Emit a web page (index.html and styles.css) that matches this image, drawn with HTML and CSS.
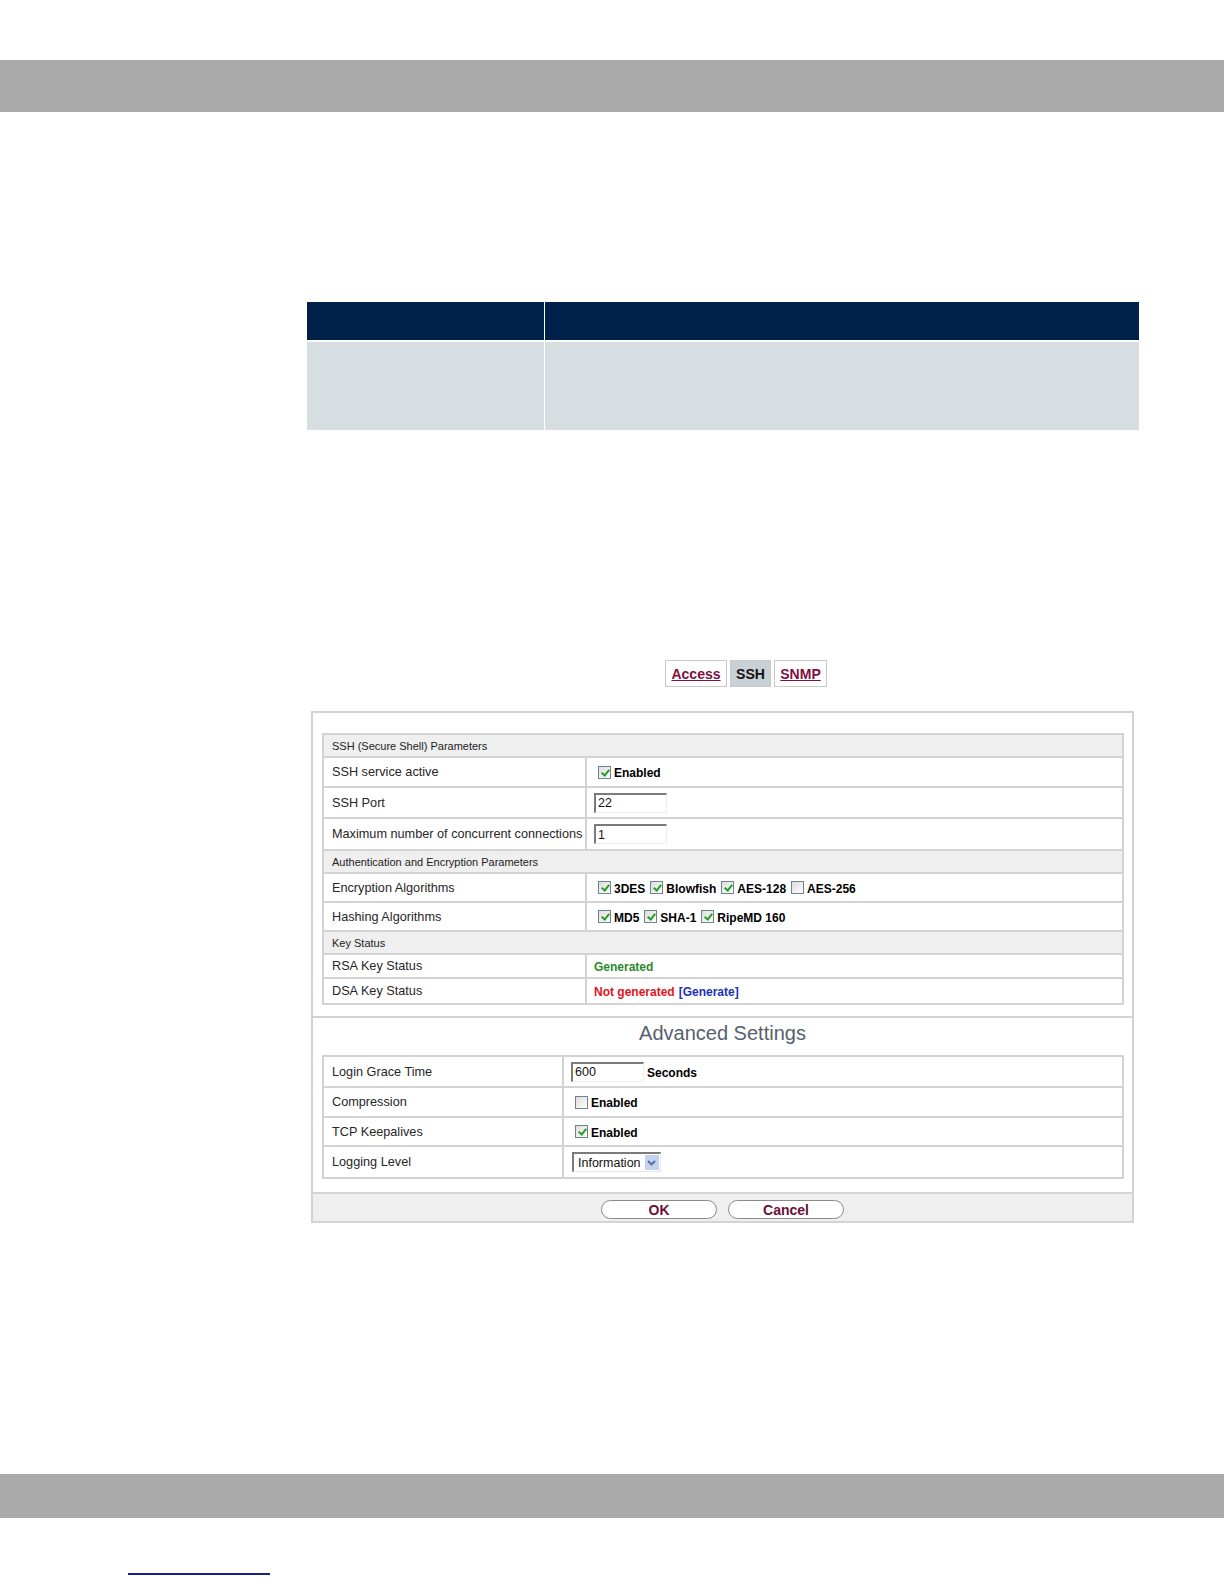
FILE: index.html
```html
<!DOCTYPE html>
<html>
<head>
<meta charset="utf-8">
<link rel="stylesheet" href="styles.css">
</head>
<body>
<div class="topbar"></div>

<div class="doc-table">
  <div class="doc-head"><div class="dh-cell"></div><div class="dh-cell"></div></div>
  <div class="doc-body"><div class="db-cell"></div><div class="db-cell"></div></div>
</div>

<div class="tabs">
  <a class="tab link t-access">Access</a>
  <span class="tab active">SSH</span>
  <a class="tab link t-snmp">SNMP</a>
</div>

<div class="panel">
  <div class="grid main">
    <div class="sect">SSH (Secure Shell) Parameters</div>
    <div class="lbl h28">SSH service active</div>
    <div class="val h28"><span class="cb on"></span><b>Enabled</b></div>
    <div class="lbl h29">SSH Port</div>
    <div class="val h29"><span class="inp">22</span></div>
    <div class="lbl h30">Maximum number of concurrent connections</div>
    <div class="val h30"><span class="inp">1</span></div>

    <div class="sect">Authentication and Encryption Parameters</div>
    <div class="lbl h27">Encryption Algorithms</div>
    <div class="val h27"><span class="cb on"></span><b>3DES</b><span class="cb on"></span><b>Blowfish</b><span class="cb on"></span><b>AES-128</b><span class="cb"></span><b>AES-256</b></div>
    <div class="lbl h27">Hashing Algorithms</div>
    <div class="val h27"><span class="cb on"></span><b>MD5</b><span class="cb on"></span><b>SHA-1</b><span class="cb on"></span><b>RipeMD 160</b></div>

    <div class="sect">Key Status</div>
    <div class="lbl h22">RSA Key Status</div>
    <div class="val h22"><b class="green">Generated</b></div>
    <div class="lbl h24">DSA Key Status</div>
    <div class="val h24"><b class="red">Not generated</b><b class="blue">[Generate]</b></div>
  </div>

  <div class="adv">
    <div class="adv-title">Advanced Settings</div>
    <div class="grid second">
      <div class="lbl h29">Login Grace Time</div>
      <div class="val h29"><span class="inp">600</span><b class="unit">Seconds</b></div>
      <div class="lbl h28">Compression</div>
      <div class="val h28"><span class="cb"></span><b>Enabled</b></div>
      <div class="lbl h27">TCP Keepalives</div>
      <div class="val h27"><span class="cb on"></span><b>Enabled</b></div>
      <div class="lbl h30">Logging Level</div>
      <div class="val h30"><span class="sel">Information<span class="arrow"><svg width="9" height="6" viewBox="0 0 9 6"><path d="M1 1 L4.5 4.5 L8 1" fill="none" stroke="#4b6ea8" stroke-width="1.8"/></svg></span></span></div>
    </div>
  </div>

  <div class="foot">
    <span class="btn">OK</span>
    <span class="btn">Cancel</span>
  </div>
</div>

<div class="bottombar"></div>
<div class="footlink"></div>
</body>
</html>
```

FILE: styles.css
```css
html, body {
  margin: 0;
  padding: 0;
  background: #ffffff;
  font-family: "Liberation Sans", Arial, sans-serif;
  color: #000;
}
.topbar {
  margin-top: 60px;
  height: 52px;
  background: #aaaaaa;
}

/* document table */
.doc-table {
  margin: 190px 0 0 307px;
  width: 832px;
}
.doc-head, .doc-body {
  display: grid;
  grid-template-columns: 237px 1fr;
  column-gap: 1px;
  background: #ffffff;
}
.doc-head { height: 38px; margin-bottom: 2px; }
.doc-body { height: 88px; }
.dh-cell { background: #00214a; }
.db-cell { background: #d7dee1; }

/* tabs */
.tabs {
  margin: 230px 0 0 665px;
  display: flex;
  gap: 3px;
  height: 27px;
}
.tab {
  box-sizing: border-box;
  height: 27px;
  border: 1px solid #c9c9c9;
  display: flex;
  align-items: center;
  justify-content: center;
  font-size: 14px;
  font-weight: bold;
}
.tab.link {
  color: #80103f;
  text-decoration: underline;
  background: #fff;
}
.t-access { width: 62px; }
.tab.active { width: 41px; background: #c9d0d6; color: #111; }
.t-snmp { width: 53px; }

/* panel */
.panel {
  margin: 24px 0 0 311px;
  width: 823px;
  box-sizing: border-box;
  border: 2px solid #d3d3d3;
}
.grid {
  display: grid;
  border: 2px solid #d3d3d3;
  background: #d3d3d3;
  gap: 2px;
  margin: 0 8px 0 9px;
}
.grid.main {
  margin-top: 20px;
  grid-template-columns: 261px 1fr;
}
.grid.second {
  grid-template-columns: 238px 1fr;
}
.sect {
  grid-column: 1 / -1;
  background: #efefef;
  height: 21px;
  font-size: 11px;
  color: #222;
  display: flex;
  align-items: center;
  padding-left: 8px;
}
.lbl, .val {
  background: #fff;
  display: flex;
  align-items: center;
}
.lbl { padding-left: 8px; color: #262626; font-size: 12.7px; }
.val { padding-left: 7px; font-size: 12px; }
.h22 { height: 22px; }
.h24 { height: 24px; }
.h27 { height: 27px; }
.h28 { height: 28px; }
.h29 { height: 29px; }
.h30 { height: 30px; }

.val b {
  font-size: 12px;
  margin-right: 5px;
  position: relative;
  top: 1px;
}
.green { color: #2b8a2b; }
.red { color: #e3121c; }
.blue { color: #2230b8; margin-left: -1px; }

.cb {
  display: inline-block;
  box-sizing: border-box;
  width: 13px;
  height: 13px;
  border: 1px solid #6f8395;
  background: linear-gradient(135deg, #dcdcdc, #ffffff);
  margin-right: 3px;
  position: relative;
  flex: none;
}
.val > .cb:first-child { margin-left: 4px; }
.cb.on::after {
  content: "";
  position: absolute;
  left: 3.5px;
  top: 1px;
  width: 3px;
  height: 6px;
  border: solid #21a121;
  border-width: 0 2px 2px 0;
  transform: rotate(40deg);
}
.inp {
  box-sizing: border-box;
  width: 73px;
  height: 20px;
  border-top: 2px solid #7b7b7b;
  border-left: 2px solid #7b7b7b;
  border-right: 1px solid #eeeeee;
  border-bottom: 1px solid #eeeeee;
  font-size: 12.5px;
  padding-left: 2px;
  display: flex;
  align-items: center;
  color: #111;
  margin-right: 3px;
}

.adv {
  border-top: 2px solid #d3d3d3;
  margin-top: 11px;
}
.adv-title {
  text-align: center;
  font-size: 20px;
  color: #56616d;
  height: 37px;
  line-height: 30px;
}
.sel {
  box-sizing: border-box;
  width: 89px;
  height: 20px;
  border-top: 2px solid #7b7b7b;
  border-left: 2px solid #7b7b7b;
  border-right: 1px solid #e5e5e5;
  border-bottom: 1px solid #e5e5e5;
  font-size: 12.5px;
  color: #111;
  display: flex;
  align-items: center;
  padding-left: 4px;
  gap: 4px;
  margin-left: 1px;
}
.arrow {
  width: 14px;
  height: 15px;
  background: #c3d3ef;
  display: flex;
  align-items: center;
  justify-content: center;
}

.foot {
  margin-top: 13px;
  border-top: 2px solid #d3d3d3;
  background: #efefef;
  height: 27px;
  display: flex;
  justify-content: center;
  align-items: center;
  gap: 11px;
}
.btn {
  box-sizing: border-box;
  width: 116px;
  height: 19px;
  border: 1px solid #8a8a8a;
  border-radius: 10px;
  background: #fff;
  color: #6b0e3a;
  font-weight: bold;
  font-size: 14px;
  line-height: 1;
  display: flex;
  align-items: center;
  justify-content: center;
  padding-top: 1px;
  margin-top: 3px;
}

.bottombar {
  margin-top: 251px;
  height: 44px;
  background: #aaaaaa;
}
.footlink {
  margin: 55px 0 0 128px;
  width: 142px;
  height: 2px;
  background: #1c1c8a;
}
```
